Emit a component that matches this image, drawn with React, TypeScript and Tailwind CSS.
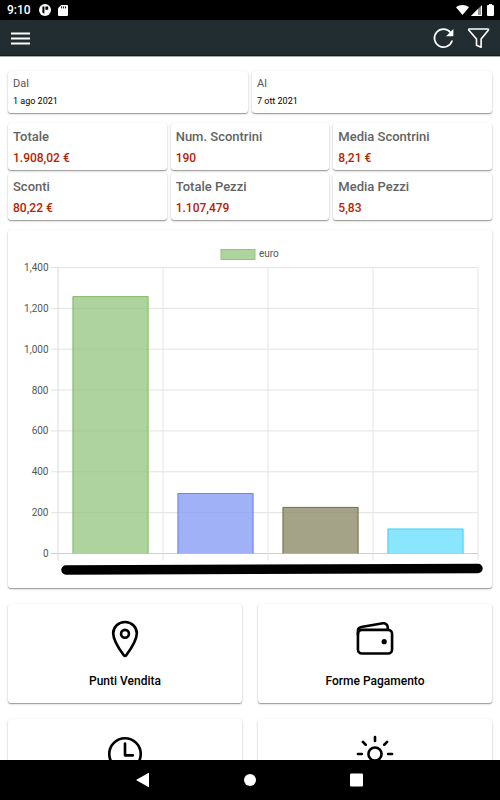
import type { ReactNode } from "react";
import {
  IoLocationOutline,
  IoSunnyOutline,
  IoTimeOutline,
  IoWalletOutline,
} from "react-icons/io5";

type Stat = { label: string; value: string };
type Bar = { value: number; fill: string; stroke: string };

const stats: Stat[] = [
  { label: "Totale", value: "1.908,02 €" },
  { label: "Num. Scontrini", value: "190" },
  { label: "Media Scontrini", value: "8,21 €" },
  { label: "Sconti", value: "80,22 €" },
  { label: "Totale Pezzi", value: "1.107,479" },
  { label: "Media Pezzi", value: "5,83" },
];

const bars: Bar[] = [
  { value: 1260, fill: "#93c47d", stroke: "#7fb95f" },
  { value: 296, fill: "#8297f6", stroke: "#5f7ff0" },
  { value: 228, fill: "#86835f", stroke: "#6f6f45" },
  { value: 122, fill: "#63defd", stroke: "#3fcdf2" },
];

const ticks = [1400, 1200, 1000, 800, 600, 400, 200, 0];

const cardShadow =
  "rounded-[3px] bg-white shadow-[0_1px_1px_rgba(0,0,0,0.32),0_1px_3px_rgba(0,0,0,0.16)]";

function StatusBar() {
  return (
    <div className="flex h-5 shrink-0 items-center bg-black pr-[6px] pl-[7px] text-white">
      <span className="text-xs font-medium">9:10</span>
      <svg className="ml-2 size-3" viewBox="0 0 12 12">
        <circle cx="6" cy="6" r="6" fill="#fff" />
        <path d="M3.4 2.6h2v7a3.8 3.8 0 0 1-2-1zM6.4 2.6h2.8v3.2H6.4z" fill="#000" />
      </svg>
      <svg className="ml-[7px] h-[11px] w-[10px]" viewBox="0 0 10 11">
        <path d="M3.2 0H9a1 1 0 0 1 1 1v9a1 1 0 0 1-1 1H1a1 1 0 0 1-1-1V3.2z" fill="#fff" />
        <path d="M3.6 1.4v2M5.6 1.4v2M7.6 1.4v2" stroke="#000" />
      </svg>
      <svg className="ml-auto h-[10px] w-[13px]" viewBox="0 0 13 10">
        <path d="M0 2.2C3.6-.7 9.4-.7 13 2.2L6.5 10z" fill="#fff" />
      </svg>
      <svg className="ml-[2px] h-[11px] w-[11px]" viewBox="0 0 11 11">
        <path d="M0 11 11 0v11z" fill="#8f9396" />
        <path d="M0 11 7 4v7z" fill="#fff" />
        <path d="M10.5 1v9.5H7" stroke="#fff" fill="none" />
      </svg>
      <svg className="ml-[5px] h-3 w-[7px]" viewBox="0 0 7 12">
        <path d="M2 0h3v1h1a1 1 0 0 1 1 1v9a1 1 0 0 1-1 1H1a1 1 0 0 1-1-1V2a1 1 0 0 1 1-1h1z" fill="#fff" />
      </svg>
    </div>
  );
}

function Toolbar() {
  return (
    <header className="flex h-9 shrink-0 items-center border-b border-[#131b1f] bg-[#222d32] px-[10px] text-white shadow-[0_1px_0_#a3a7a9]">
      <button type="button" aria-label="Menu">
        <svg className="h-5 w-5" viewBox="0 0 20 20" stroke="currentColor" strokeWidth="1.8">
          <path d="M1 5.5h19M1 10.5h19M1 15.5h19" />
        </svg>
      </button>
      <button type="button" aria-label="Aggiorna" className="ml-auto">
        <svg className="h-[22px] w-[22px]" viewBox="0 0 22 22">
          <path
            d="M18.5 5.5A9 9 0 1 0 20 14"
            fill="none"
            stroke="currentColor"
            strokeWidth="1.7"
            strokeLinecap="round"
          />
          <path d="M21.4 2v6.600q0 .6-.6.600H14z" fill="currentColor" />
        </svg>
      </button>
      <button type="button" aria-label="Filtra" className="ml-3">
        <svg
          className="h-[22px] w-6"
          viewBox="0 0 24 22"
          fill="none"
          stroke="currentColor"
          strokeWidth="1.6"
          strokeLinejoin="round"
        >
          <path d="M3.4 2h18.4q1.2.1.5 1.2l-7.2 8.8v8.2l-4.600-2v-6.200L2.900 3.200Q2.200 2.100 3.400 2z" />
        </svg>
      </button>
    </header>
  );
}

function DateField({ label, value }: { label: string; value: string }) {
  return (
    <button type="button" className={`${cardShadow} px-[5px] py-1 text-left`}>
      <span className="block text-[11px] leading-[17px] text-[#555]">{label}</span>
      <span className="mt-[2px] block text-[9px] leading-[15px] text-black">{value}</span>
    </button>
  );
}

function StatCard({ label, value }: Stat) {
  return (
    <div className={`${cardShadow} px-[5px] pt-[5px] pb-1`}>
      <div className="truncate text-[13px] leading-[18px] font-medium text-[#636363]">{label}</div>
      <div className="mt-1 text-xs leading-4 font-medium text-[#b72300]">{value}</div>
    </div>
  );
}

function SalesChart() {
  const left = 50;
  const top = 38.5;
  const height = 286;
  const step = 105;
  const bottom = top + height;
  const toY = (v: number) => bottom - (v / 1400) * height;

  return (
    <svg viewBox="0 1 484 358" className="block w-full" role="img" aria-label="Grafico euro">
      <rect x="213" y="20.5" width="34" height="10" fill="#93c47d" fillOpacity="0.75" stroke="#93c47d" />
      <text x="251" y="28" fontSize="10" fill="#555">
        euro
      </text>
      {ticks.map((t) => (
        <g key={t}>
          <line x1="43" x2="470" y1={toY(t)} y2={toY(t)} stroke={t === 0 ? "#cfcfcf" : "#e2e2e2"} />
          <text x="40.5" y={toY(t) + 3.5} fontSize="10" textAnchor="end" fill="#555">
            {t.toLocaleString("en-US")}
          </text>
        </g>
      ))}
      {[0, 1, 2, 3, 4].map((i) => (
        <line
          key={i}
          x1={left + i * step}
          x2={left + i * step}
          y1={top}
          y2={bottom + 7}
          stroke={i === 0 ? "#d9d9d9" : "#e4e4e4"}
        />
      ))}
      {bars.map((b, i) => {
        const x = left + 14.5 + i * step;
        const y = toY(b.value);
        return (
          <g key={i}>
            <rect x={x} y={y} width="76" height={bottom - y} fill={b.fill} fillOpacity="0.75" />
            <path d={`M${x + 0.5} ${bottom}V${y + 0.5}h75V${bottom}`} fill="none" stroke={b.stroke} strokeOpacity="0.85" />
          </g>
        );
      })}
      {/* category names are blacked out */}
      <path d="M58 341 470 339.5" stroke="#000" strokeWidth="9.5" strokeLinecap="round" />
    </svg>
  );
}

function Tile({ label, children }: { label?: string; children: ReactNode }) {
  return (
    <button type="button" className={`${cardShadow} flex h-[99px] flex-col items-center pt-[14px]`}>
      {children}
      {label && <span className="mt-[13px] text-xs leading-4 font-medium text-black">{label}</span>}
    </button>
  );
}

function NavBar() {
  return (
    <nav className="flex h-10 shrink-0 items-center justify-center gap-[93px] bg-black text-white">
      <button type="button" aria-label="Indietro">
        <svg className="size-[14px]" viewBox="0 0 14 14" fill="currentColor">
          <path d="M13 .2v13.6a.4.4 0 0 1-.6.2L.8 7.5a.6.6 0 0 1 0-1L12.4 0a.4.4 0 0 1 .6.2z" />
        </svg>
      </button>
      <button type="button" aria-label="Home">
        <svg className="size-[14px]" viewBox="0 0 14 14" fill="currentColor">
          <circle cx="7" cy="7" r="6" />
        </svg>
      </button>
      <button type="button" aria-label="Recenti">
        <svg className="size-[14px]" viewBox="0 0 14 14" fill="currentColor">
          <rect width="13" height="13" y="0.5" rx="1" />
        </svg>
      </button>
    </nav>
  );
}

export default function App() {
  return (
    <div className="flex h-screen flex-col bg-white font-['Roboto',sans-serif]">
      <StatusBar />
      <Toolbar />
      <main className="min-h-0 flex-1 overflow-hidden px-2 pt-[15px]">
        <div className="grid grid-cols-2 gap-1">
          <DateField label="Dal" value="1 ago 2021" />
          <DateField label="Al" value="7 ott 2021" />
        </div>
        <div className="mt-[10px] grid grid-cols-3 gap-x-1 gap-y-[3px]">
          {stats.map((s) => (
            <StatCard key={s.label} {...s} />
          ))}
        </div>
        <section className={`${cardShadow} mt-[10px]`}>
          <SalesChart />
        </section>
        <div className="mt-4 grid grid-cols-2 gap-4">
          <Tile label="Punti Vendita">
            <IoLocationOutline className="size-[42px]" />
          </Tile>
          <Tile label="Forme Pagamento">
            <IoWalletOutline className="size-[42px]" />
          </Tile>
          <Tile>
            <IoTimeOutline className="size-[42px]" />
          </Tile>
          <Tile>
            <IoSunnyOutline className="size-[42px]" />
          </Tile>
        </div>
      </main>
      <NavBar />
    </div>
  );
}
